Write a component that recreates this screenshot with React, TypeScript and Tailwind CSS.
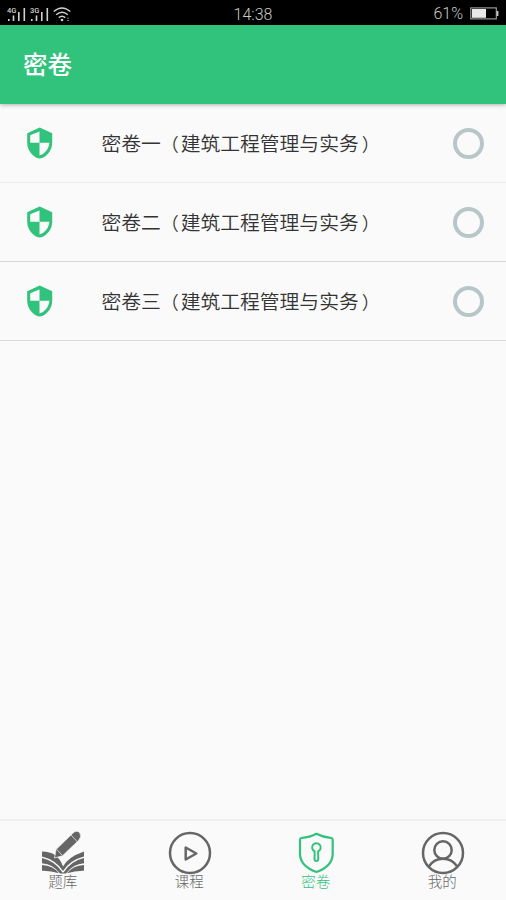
import React from 'react';

const papers = ['密卷一', '密卷二', '密卷三'];
const subject = '建筑工程管理与实务';

function Signal({ label }: { label: string }) {
  return (
    <svg width="19" height="16" viewBox="0 0 19 16" fill="#d0d0d0">
      <text x="0" y="6.500" fontSize="7.5" fontWeight="500" fontFamily="Roboto, sans-serif">{label}</text>
      <rect x="1" y="13" width="1.6" height="2" />
      <rect x="5.7" y="9.5" width="1.6" height="5.5" />
      <rect x="11" y="6" width="1.6" height="9" />
      <rect x="16.5" y="2" width="1.6" height="13" />
    </svg>
  );
}

function Wifi() {
  return (
    <svg width="19" height="16" viewBox="0 0 19 16" fill="none" stroke="#d0d0d0" strokeWidth="1.4">
      <path d="M.7 5.6Q9 -1.8 17.3 5.6M3.2 8.8Q9 3.6 14.8 8.8M5.8 11.6Q9 8.8 12.2 11.6" />
      <circle cx="9" cy="14" r="1.3" fill="#d0d0d0" stroke="none" />
      <path d="M14 12.2h2M14 14.5h2" stroke="#777" strokeWidth="1" />
    </svg>
  );
}

function StatusBar() {
  return (
    <div className="grid h-[25px] shrink-0 grid-cols-3 items-center bg-black text-[16px] text-[#c9c9c9]">
      <div className="flex gap-[4px] pl-[7px]">
        <Signal label="4G" />
        <Signal label="3G" />
        <Wifi />
      </div>
      <div className="pt-[3px] text-center font-['Roboto',sans-serif] font-light">14:38</div>
      <div className="flex items-center justify-end gap-[7px] pr-[7px] font-['Roboto',sans-serif] font-light">
        <span className="pt-px">61%</span>
        <svg width="29" height="13" viewBox="0 0 29 13">
          <rect x=".8" y=".9" width="25.5" height="11" fill="none" stroke="#a5a5a5" strokeWidth="1.1" />
          <rect x="2" y="2" width="14" height="8.8" fill="#e8e8e8" />
          <rect x="26.6" y="4" width="1.8" height="5" fill="#c9c9c9" />
        </svg>
      </div>
    </div>
  );
}

function Shield() {
  return (
    <svg className="shrink-0" width="27" height="32" viewBox="0 0 27 32">
      <g transform="translate(.7 .3)">
        <path d="M13 .3 25.500 6v9.500C25.500 23 20 30.300 13 31.300 6 30.300.5 23 .5 15.500V6Z" fill="#31c27c" />
        <path d="M12.800 4.200V15.500H3.500V8ZM12.800 15.500H22.700C22.300 21.500 18.200 26.700 12.800 28.200Z" fill="#fafafa" />
      </g>
    </svg>
  );
}

function BookIcon() {
  return (
    <svg width="44" height="44" viewBox="0 0 44 44" fill="#666">
      <path d="M1 20.500Q17 20.500 22 35.500Q27 26 43 20.500V25.500Q29 29 22 40Q15 29 1 25.500Z" />
      <path d="M1 27Q14 30 21.500 41.500H22.500Q30 30 43 27V32.300Q32 33 25 42.500H19Q12 33 1 32.300Z" />
      <path d="M1 34Q12 34.500 18 42.300Q10 39.500 1 39.700ZM43 34Q32 34.500 26 42.300Q34 39.500 43 39.700Z" />
      <path d="M31.500 2.500Q36-2 39 2.200Q41 6 37.500 9.500L21.500 24.800 13.500 27 15 18.500Z" stroke="#fafafa" strokeWidth=".7" />
      <path d="m30 4 6.500 7M15.800 18.500l5.500 5.800" fill="none" stroke="#fafafa" strokeWidth=".7" />
    </svg>
  );
}

function PlayIcon() {
  return (
    <svg width="44" height="44" viewBox="0 0 44 44" fill="none" stroke="#666" strokeWidth="2.500">
      <circle cx="22" cy="22" r="20" />
      <path d="M17.700 16.500V28.500L28.300 22.500Z" strokeLinejoin="round" />
    </svg>
  );
}

function LockShieldIcon() {
  return (
    <svg width="44" height="44" viewBox="0 0 44 44" fill="none" stroke="#31c27c" strokeWidth="2.200" strokeLinejoin="round">
      <path d="M22.500 2.800Q29 6.300 37.500 7Q38.700 7.300 38.700 9V22.500C38.700 32 31 38 22.500 41C14 38 6 32 6 22.500V9Q6 7.300 7.200 7Q16 6.300 22.500 2.800Z" />
      <path d="M20.700 20.400A4.300 4.300 0 1 1 24.100 20.400L24.300 28Q24.200 30 22.400 30Q20.600 30 20.500 28Z" strokeWidth="2" />
    </svg>
  );
}

function UserIcon() {
  return (
    <svg width="44" height="44" viewBox="0 0 44 44" fill="none" stroke="#666" strokeWidth="2.500">
      <circle cx="22" cy="22" r="20" />
      <circle cx="22" cy="19" r="8.700" />
      <path d="M7.800 35.500Q13 27.800 22 27.800T36.200 35.500" />
    </svg>
  );
}

const tabs = [
  { label: '题库', Icon: BookIcon },
  { label: '课程', Icon: PlayIcon },
  { label: '密卷', Icon: LockShieldIcon, active: true },
  { label: '我的', Icon: UserIcon },
];

export default function App() {
  return (
    <div className="flex h-[900px] w-[506px] flex-col overflow-hidden bg-[#fafafa] font-['Noto_Sans_CJK_SC',sans-serif]">
      <StatusBar />
      <header className="z-10 flex h-[79px] shrink-0 items-center bg-[#31c27c] pl-[23px] text-[24.500px] font-medium text-white shadow-[0_1px_4px_rgba(0,0,0,0.3)]">
        密卷
      </header>
      <main className="flex-1">
        {papers.map((paper, i) => (
          <div key={paper} className={`flex h-[79px] items-center border-b pr-[22px] pl-[26px] ${i === 0 ? 'border-[#ececec]' : 'border-[#d8d8d8]'}`}>
            <Shield />
            <span className="ml-[48.500px] flex-1 text-[19.800px] font-[350] whitespace-nowrap text-[#333]">
              {paper}
              <span className="mr-[1.800px] text-[18px]">（</span>
              {subject}
              <span className="ml-[3px] text-[18px]">）</span>
            </span>
            <span className="size-[31px] shrink-0 rounded-full border-4 border-[#b7c6c8]" />
          </div>
        ))}
      </main>
      <nav className="grid h-[81px] shrink-0 grid-cols-4 border-t-2 border-[#f0f0f0]">
        {tabs.map(({ label, Icon, active }) => (
          <div key={label} className={`flex flex-col items-center pt-[10px] ${active ? 'text-[#31c27c]' : 'text-[#666]'}`}>
            <Icon />
            <span className="-mt-[4px] mr-[1px] text-[14.500px] leading-[20px] font-light">{label}</span>
          </div>
        ))}
      </nav>
    </div>
  );
}
